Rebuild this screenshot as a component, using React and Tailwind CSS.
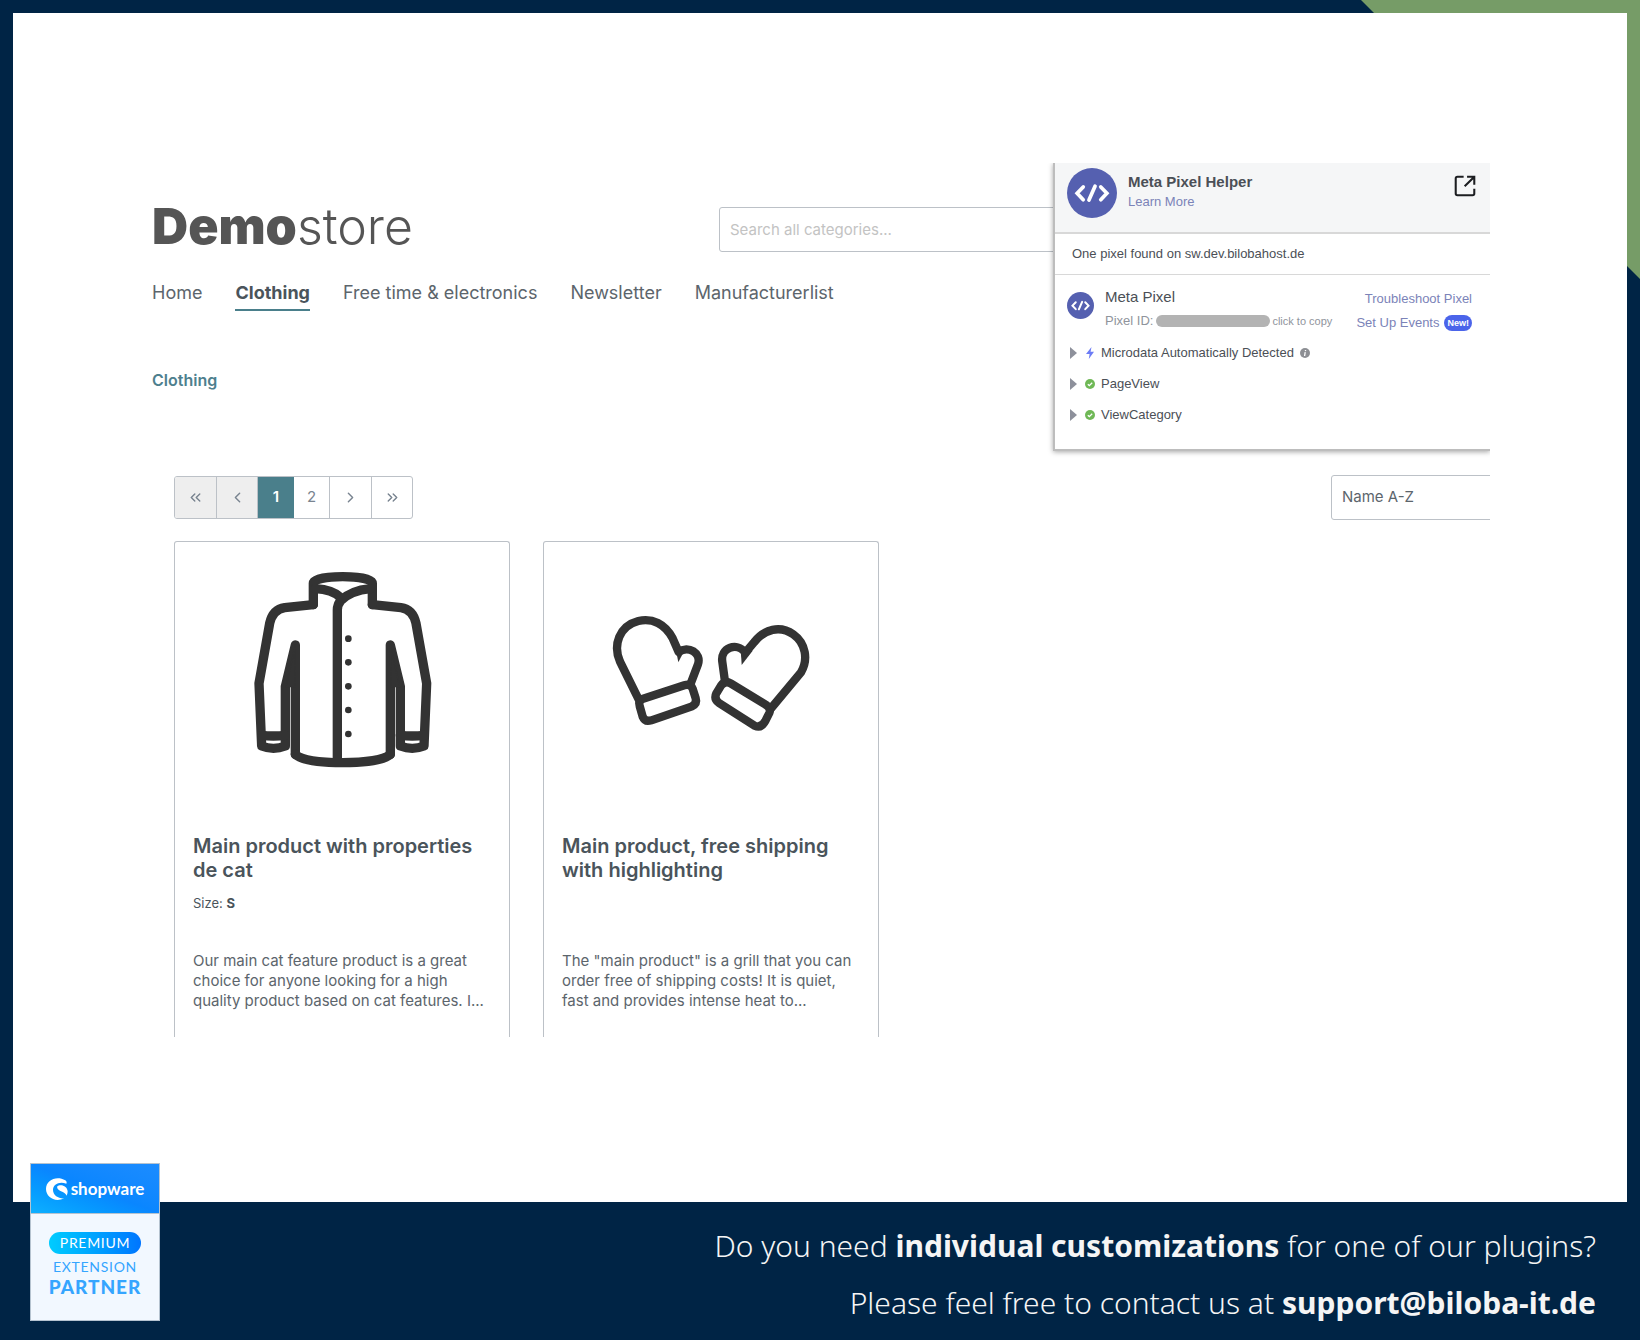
import { ChevronLeft, ChevronRight, ChevronsLeft, ChevronsRight } from 'lucide-react';

const navItems = ['Home', 'Clothing', 'Free time & electronics', 'Newsletter', 'Manufacturerlist'];

const events = [
  { name: 'Microdata Automatically Detected', icon: 'bolt', info: true },
  { name: 'PageView', icon: 'check' },
  { name: 'ViewCategory', icon: 'check' },
];

const products = [
  {
    name: 'Main product with properties de cat',
    size: 'S',
    text: 'Our main cat feature product is a great choice for anyone looking for a high quality product based on cat features. I...',
    Picture: Jacket,
  },
  {
    name: 'Main product, free shipping with highlighting',
    text: 'The "main product" is a grill that you can order free of shipping costs! It is quiet, fast and provides intense heat to...',
    Picture: Mittens,
  },
];

function Jacket() {
  const half = (
    <>
      <path d="M460 434L374 443C346 447 334 468 329 490L297 670L305 858Q340 872 376 858V680L406 555V883" />
      <path d="M305 826Q340 830 376 826" />
      <path d="M406 555L378 680H404Z" fill="#333" strokeWidth="4" />
    </>
  );
  return (
    <svg viewBox="246 333 600 600" className="size-[200px]" fill="none" stroke="#333" strokeWidth="28" strokeLinecap="round" strokeLinejoin="round">
      {half}
      <g transform="translate(1097 0) scale(-1 1)">{half}</g>
      <path d="M460 434V370C460 357 500 350 548 350S637 357 637 370V434" />
      <path d="M466 386C498 388 525 396 541 412M631 386C590 390 558 406 542 422Q532 434 532 450V900" />
      <path d="M406 883C424 900 480 908 548 908S673 900 691 883" />
      {[536, 607, 679, 750, 822].map(y => <circle key={y} cx="565" cy={y} r="10" fill="#333" stroke="none" />)}
    </svg>
  );
}

function Mittens() {
  return (
    <svg viewBox="243 123 600 600" className="size-[200px]" fill="none" stroke="#333" strokeWidth="25" strokeLinecap="round" strokeLinejoin="round">
      <path d="M326 508L270 395C248 345 268 288 325 273C367 263 405 282 428 325L446 366C475 345 515 369 504 403L483 458" />
      <path d="M436 352L445 397L464 360Z" fill="#333" stroke="none" />
      <path d="M337 507L463 466Q482 460 488 476L497 505Q502 521 486 529L364 571Q345 577 338 560L329 528Q324 513 337 507Z" />
      <path d="M724 534L813 427C835 390 828 340 790 313C750 285 703 297 672 337L646 368C620 334 570 355 577 396L585 455" />
      <path d="M632 358L635 405L668 362Z" fill="#333" stroke="none" />
      <path d="M602 460L710 526Q724 536 718 549L706 573Q693 596 674 587L567 519Q551 507 559 490L573 467Q585 450 602 460Z" />
    </svg>
  );
}

function PixelLogo({ className }) {
  return (
    <svg viewBox="0 0 148 148" className={className} fill="none" stroke="#fff" strokeWidth="11" strokeLinecap="round">
      <circle cx="74" cy="74" r="74" fill="#5560b0" stroke="none" />
      <path d="M48 56L30 75L48 94M100 56L118 75L100 94" />
      <path d="M83 54L65 95" />
    </svg>
  );
}

function EventIcon({ type }) {
  if (type === 'bolt') {
    return (
      <svg viewBox="0 0 10 12" className="w-[10px] h-[12px]">
        <path d="M6.5 0L1 7H4.6L3.8 12L9 4.8H5.6Z" fill="#6c7cf5" />
      </svg>
    );
  }
  return (
    <svg viewBox="0 0 10 10" className="size-[10px]">
      <circle cx="5" cy="5" r="5" fill="#6fb856" />
      <path d="M2.8 5.2L4.3 6.6L7.2 3.7" fill="none" stroke="#fff" strokeWidth="1.3" />
    </svg>
  );
}

function PixelHelper() {
  return (
    <aside className="absolute top-0 right-0 w-[437px] h-[288px] bg-white border-l-2 border-b-2 border-[#bdbdbd] shadow-[0_1px_5px_rgba(0,0,0,0.35)] font-['Liberation_Sans',sans-serif] text-[13px] text-[#4b4f56]">
      <header className="flex h-[71px] bg-[#f5f6f7] border-b-2 border-[#d8d8d8] pl-3 pr-[14px] pt-[5px]">
        <PixelLogo className="size-[50px] shrink-0" />
        <div className="ml-[11px] pt-1 flex-1">
          <h2 className="text-[15px] leading-5 font-bold">Meta Pixel Helper</h2>
          <a href="#learn" className="block leading-5 text-[#7b83b8]">Learn More</a>
        </div>
        <button aria-label="Open in new window" className="self-start mt-[7px]">
          <svg viewBox="0 0 64 64" className="size-[22px]" fill="none" stroke="#1c1e21" strokeWidth="6">
            <path d="M28 5H10Q5 5 5 10V54Q5 59 10 59H54Q59 59 59 54V40M31 33L57 7M38 5H59V28" />
          </svg>
        </button>
      </header>
      <p className="h-[41px] border-b border-[#d8d8d8] pl-[17px] leading-[40px]">One pixel found on sw.dev.bilobahost.de</p>
      <div className="flex pl-3 pr-[18px] pt-[10px]">
        <PixelLogo className="size-[27px] mt-[7px]" />
        <div className="ml-[11px] flex-1">
          <h3 className="text-[15px] leading-6">Meta Pixel</h3>
          <div className="flex items-center leading-6 text-[#90949c]">
            Pixel ID:
            <span className="ml-[3px] w-[114px] h-3 rounded-full bg-[#b3b3b3]" />
            <button className="ml-[2px] text-[11px]">click to copy</button>
          </div>
        </div>
        <div className="flex flex-col items-end pt-[2px] leading-6 text-[#7b83b8]">
          <a href="#troubleshoot">Troubleshoot Pixel</a>
          <a href="#events" className="flex items-center gap-[5px]">
            Set Up Events
            <span className="rounded-full bg-[#4b64ea] px-[3px] text-[9px] leading-4 font-bold text-white">New!</span>
          </a>
        </div>
      </div>
      <ul className="pl-[15px] pt-[2px]">
        {events.map(e => (
          <li key={e.name} className="flex items-center h-[31px]">
            <svg viewBox="0 0 7 12" className="w-[7px] h-3"><path d="M0 0L7 6L0 12Z" fill="#8d909b" /></svg>
            <span className="ml-2 mr-[6px] flex"><EventIcon type={e.icon} /></span>
            {e.name}
            {e.info && (
              <svg viewBox="0 0 10 10" className="ml-[6px] size-[10px]">
                <circle cx="5" cy="5" r="5" fill="#8d8f94" />
                <path d="M5.6 2L5.4 3.1M5.2 4.2L4.6 8" stroke="#fff" strokeWidth="1.3" />
              </svg>
            )}
          </li>
        ))}
      </ul>
    </aside>
  );
}

function Pagination() {
  const cell = 'flex items-center justify-center border-r border-[#bcc1c7] text-[#798490]';
  return (
    <nav aria-label="Pages" className="flex h-[43px] rounded-[3px] border border-[#bcc1c7] overflow-hidden text-[15px]">
      <button disabled aria-label="First" className={`${cell} w-[42px] bg-[#eee]`}><ChevronsLeft size={17} /></button>
      <button disabled aria-label="Previous" className={`${cell} w-[41px] bg-[#eee]`}><ChevronLeft size={17} /></button>
      <button className="w-9 bg-[#4a7f8b] text-white font-semibold">1</button>
      <button className={`${cell} w-9`}>2</button>
      <button aria-label="Next" className={`${cell} w-[42px]`}><ChevronRight size={17} /></button>
      <button aria-label="Last" className="flex w-10 items-center justify-center text-[#798490]"><ChevronsRight size={17} /></button>
    </nav>
  );
}

function PartnerBadge() {
  return (
    <div className="absolute left-[30px] bottom-[19px] w-[130px] h-[158px] flex flex-col items-center border border-[#b5c3d0] bg-[#f2f8ff] font-[Lato,sans-serif] text-[#35a5ff]">
      <div className="flex w-full h-[50px] items-center justify-center gap-[3px] border-b border-[#b5c3d0] bg-linear-to-tr from-[#0fb0ff] via-[#0a86ff] to-[#1c8cff] text-white">
        <svg viewBox="0 0 66 66" className="size-[22px]" fill="#fff">
          <path d="M58 7C32-8 0 6 0 33C0 58 28 74 54 61C40 63 21 53 21 36C21 19 40 9 61 17Q64 12 58 7Z" />
          <path d="M33 26C43 17 65 24 65 41Q65 47 61 53C60 39 34 42 33 26Z" />
        </svg>
        <span className="text-[17px] leading-5 font-bold">shopware</span>
      </div>
      <span className="mt-[18px] w-[92px] rounded-full bg-linear-to-r from-[#00ccff] to-[#0075ff] text-center text-[14px] leading-[22px] tracking-wider text-white">PREMIUM</span>
      <span className="mt-[3px] text-[14px] leading-5 tracking-wider">EXTENSION</span>
      <span className="text-[19px] leading-5 font-black tracking-wider">PARTNER</span>
    </div>
  );
}

export default function App() {
  return (
    <div className="relative min-h-screen flex flex-col bg-[#002445] px-[13px] pt-[13px] font-[Inter,sans-serif] text-[#4a545b]">
      <div className="absolute top-0 right-0 size-[279px] bg-[#769c67] [clip-path:polygon(0_0,100%_0,100%_100%)]" />

      <main className="relative flex-1 bg-white pl-[139px] pr-[137px] pt-[150px]">
        <div className="relative overflow-hidden">
          <header className="flex justify-between pt-11">
            <a href="#home" className="text-[50px] leading-[38px] font-black text-[#555]">Demo<span className="font-light">store</span></a>
            <input
              type="search"
              aria-label="Search"
              placeholder="Search all categories..."
              className="mr-[171px] w-[600px] h-[45px] rounded-[3px] border border-[#bcc1c7] px-[10px] text-[15px] placeholder:text-[#c3c3c3]"
            />
          </header>

          <nav className="flex gap-[33px] mt-[29px] text-[18px] leading-6">
            {navItems.map(item => (
              <a key={item} href="#nav" className={item === 'Clothing' ? 'pb-1 border-b-2 border-[#4a7f8b] font-bold' : 'text-[#5c656c]'}>{item}</a>
            ))}
          </nav>

          <a href="#clothing" className="block mt-[59px] text-[16px] leading-5 font-semibold text-[#4e7f8e]">Clothing</a>

          <section className="pl-[22px] mt-[85px]">
            <div className="flex items-center justify-between">
              <Pagination />
              <select aria-label="Sorting" className="appearance-none shrink-0 w-[180px] -mr-[21px] h-[45px] rounded-[3px] border border-[#bcc1c7] px-[10px] text-[15px] text-[#5c656c]">
                <option>Name A-Z</option>
              </select>
            </div>

            <div className="flex gap-[33px] mt-[21px]">
              {products.map(({ name, size, text, Picture }) => (
                <article key={name} className="w-[336px] rounded-t-[3px] border border-b-0 border-[#bcc1c7] px-[18px] pb-[26px]">
                  <div className="flex h-[258px] items-center justify-center"><Picture /></div>
                  <h2 className="mt-[34px] text-[20px] leading-6 font-semibold">{name}</h2>
                  <p className="mt-[11px] h-5 text-[13px] leading-5">{size && <>Size: <b>{size}</b></>}</p>
                  <p className="mt-[38px] text-[15px] leading-5 text-[#5c656c]">{text}</p>
                </article>
              ))}
            </div>
          </section>

          <PixelHelper />
        </div>
      </main>

      <footer className="relative h-[138px] pt-[15px] pr-[31px] text-right font-['Noto_Sans',sans-serif] text-[30px] leading-[57px] font-light text-[#f5f5f5]">
        <p>Do you need <b className="font-bold">individual customizations</b> for one of our plugins?</p>
        <p>Please feel free to contact us at <a href="mailto:support@biloba-it.de" className="font-bold">support@biloba-it.de</a></p>
      </footer>
      <PartnerBadge />
    </div>
  );
}
